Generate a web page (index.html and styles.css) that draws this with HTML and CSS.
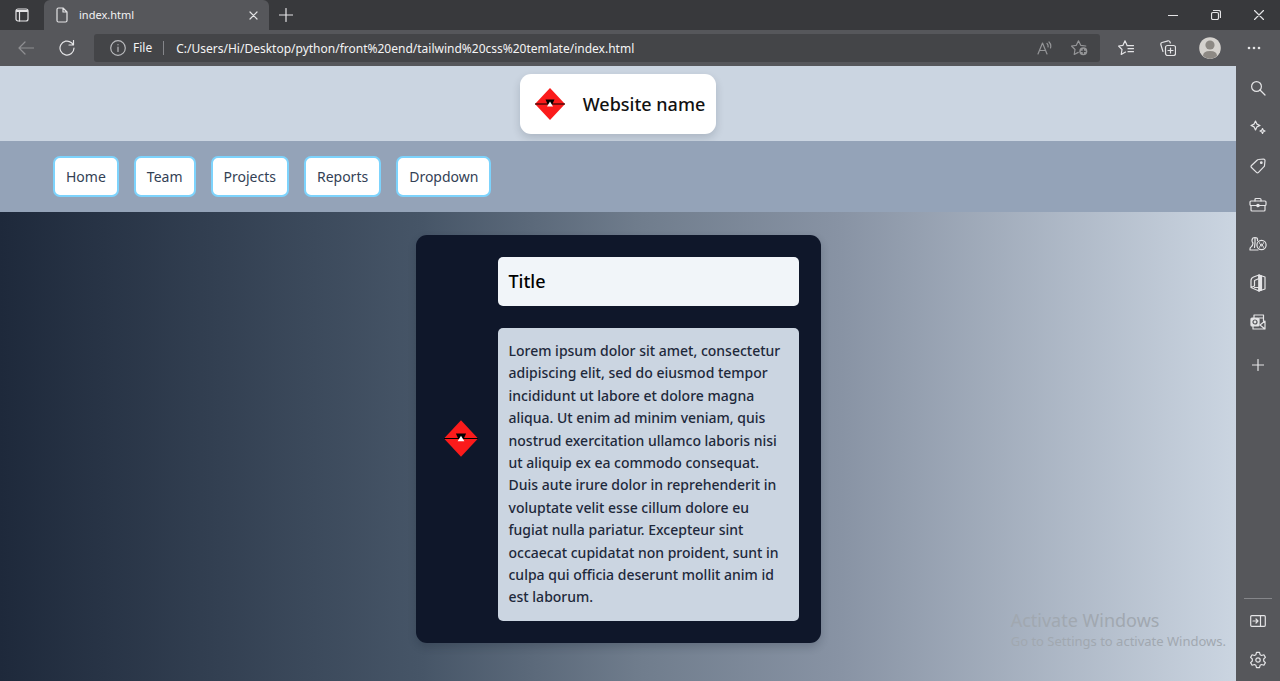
FILE: index.html
```html
<!DOCTYPE html>
<html lang="en">
<head>
<meta charset="utf-8">
<title>index.html</title>
<link rel="stylesheet" href="styles.css">
</head>
<body>
<svg width="0" height="0" class="defs" aria-hidden="true">
  <symbol id="logo" viewBox="0 0 30 32">
    <path d="M15 0 30 16 15 32 0 16z" fill="#fb1b1b"/>
    <path d="M0 16h30" stroke="#000" stroke-width="1"/>
    <path d="M10.500 11.500h9l-2 4.500h-5z" fill="#000"/>
    <path d="M15 13.500 18 18.500h-6z" fill="#fff"/>
  </symbol>
</svg>
<div class="window">
  <header class="tabbar">
    <button class="icon-btn tab-actions" aria-label="Tab actions"><svg width="14" height="14" viewBox="0 0 14 14"><rect x="1" y="1" width="12" height="12" rx="2"/><path d="M1.500 2.500h11M1.500 3.500h11M4.500 4v9"/></svg></button>
    <div class="tab">
      <svg width="12" height="16" viewBox="0 0 12 16"><path d="M1 2.500Q1 1 2.500 1H7l4 4v8.500q0 1.500-1.500 1.500h-7Q1 15 1 13.500zM7 1v4h4"/></svg>
      <span class="tab-title">index.html</span>
      <button class="icon-btn" aria-label="Close tab"><svg width="9" height="9" viewBox="0 0 9 9"><path d="m1 1 7 7M8 1 1 8"/></svg></button>
    </div>
    <button class="icon-btn new-tab" aria-label="New tab"><svg width="14" height="14" viewBox="0 0 14 14"><path d="M7 .5v13M.5 7h13"/></svg></button>
    <div class="window-controls">
      <button class="icon-btn" aria-label="Minimize"><svg width="10" height="10" viewBox="0 0 10 10"><path d="M0 5.500h10"/></svg></button>
      <button class="icon-btn" aria-label="Restore"><svg width="10" height="10" viewBox="0 0 10 10"><rect x=".5" y="2.500" width="7" height="7" rx="1.500"/><path d="M2.500.5H7.500q2 0 2 2v5"/></svg></button>
      <button class="icon-btn" aria-label="Close"><svg width="10" height="10" viewBox="0 0 10 10"><path d="m.5.5 9 9M9.500.5l-9 9"/></svg></button>
    </div>
  </header>
  <div class="toolbar">
    <button class="icon-btn back" aria-label="Back"><svg width="16" height="14" viewBox="0 0 16 14"><path d="M15.500 7H1M7 1 1 7l6 6"/></svg></button>
    <button class="icon-btn reload" aria-label="Refresh"><svg width="16" height="16" viewBox="0 0 16 16"><path d="M15 8A7 7 0 1 1 12.500 2.700L14 4.500M14.500.5v4.500H10"/></svg></button>
    <div class="address">
      <svg class="info" width="16" height="16" viewBox="0 0 16 16"><circle cx="8" cy="8" r="7.300"/><path d="M8 7.200v4.300M8 4.500v.3"/></svg>
      <span class="scheme">File</span>
      <input class="url" aria-label="Address" value="C:/Users/Hi/Desktop/python/front%20end/tailwind%20css%20temlate/index.html">
      <button class="icon-btn dim" aria-label="Read aloud"><svg width="16" height="14" viewBox="0 0 16 14"><path d="m1 13 4.500-11L10 13M2.500 9.500h6M10 2.500q1.500 1.500 1 3.500M12 1q2.500 2.500 1.500 6"/></svg></button>
      <button class="icon-btn dim" aria-label="Add to favorites"><svg width="17" height="16" viewBox="0 0 17 16"><path d="M14.800 6 9.700 5.300 7.500.8 5.300 5.300.5 6l3.500 3.500-.8 5 4-2.100"/><circle cx="12.300" cy="11.300" r="4" fill="#e4e4e6" stroke="none"/><path d="M12.300 9.300v4M10.300 11.300h4" stroke="#444548"/></svg></button>
    </div>
    <div class="tools">
      <button class="icon-btn" aria-label="Favorites"><svg width="16" height="16" viewBox="0 0 16 16"><path d="M14 5.700 9 5.300 7 .8 5 5.300.6 6l3.400 3.500-.8 5 4.300-2.400M10 8.700h5.500M9 5.700h6.500M10 11.700h5.500"/></svg></button>
      <button class="icon-btn" aria-label="Collections"><svg width="16" height="16" viewBox="0 0 16 16"><rect x="5.500" y="5.500" width="10" height="10" rx="2"/><path d="M10.500 8v5M8 10.500h5M3 11.500.8 4.500Q.5 3 2 2.500l6-1.700q1.500-.3 2 1.200l.3 1"/></svg></button>
      <button class="icon-btn" aria-label="Profile"><svg class="avatar" width="22" height="22" viewBox="0 0 22 22"><circle cx="11" cy="11" r="10.800" fill="#d5d2ce"/><circle cx="11" cy="8" r="4.600" fill="#8d8984"/><path d="M4 19q0-5 7-5t7 5a10.500 10.500 0 0 1-14 0z" fill="#8d8984"/></svg></button>
      <button class="icon-btn" aria-label="More"><svg class="dots" width="14" height="4" viewBox="0 0 14 4"><circle cx="2" cy="2" r="1.300"/><circle cx="7" cy="2" r="1.300"/><circle cx="12" cy="2" r="1.300"/></svg></button>
    </div>
  </div>
  <div class="content">
    <div class="page">
      <div class="banner">
        <div class="brand"><svg class="logo brand-logo"><use href="#logo"/></svg><span>Website name</span></div>
      </div>
      <nav class="nav">
        <a href="#">Home</a><a href="#">Team</a><a href="#">Projects</a><a href="#">Reports</a><a href="#">Dropdown</a>
      </nav>
      <main class="main">
        <article class="card">
          <svg class="logo card-logo"><use href="#logo"/></svg>
          <div class="card-body">
            <h1 class="title">Title</h1>
            <p class="text">Lorem ipsum dolor sit amet, consectetur<br>adipiscing elit, sed do eiusmod tempor<br>incididunt ut labore et dolore magna<br>aliqua. Ut enim ad minim veniam, quis<br>nostrud exercitation ullamco laboris nisi<br>ut aliquip ex ea commodo consequat.<br>Duis aute irure dolor in reprehenderit in<br>voluptate velit esse cillum dolore eu<br>fugiat nulla pariatur. Excepteur sint<br>occaecat cupidatat non proident, sunt in<br>culpa qui officia deserunt mollit anim id<br>est laborum.</p>
          </div>
        </article>
      </main>
      <div class="watermark"><div class="wm-title">Activate Windows</div><div class="wm-text">Go to Settings to activate Windows.</div></div>
    </div>
    <aside class="sidebar">
      <button class="icon-btn" aria-label="Search"><svg width="16" height="16" viewBox="0 0 16 16"><circle cx="6.500" cy="6.500" r="4.900"/><path d="m10 10 5 5"/></svg></button>
      <button class="icon-btn" aria-label="Discover"><svg width="16" height="16" viewBox="0 0 16 16"><path d="M5.500 2 6.900 5.100 10 6.500 6.900 7.900 5.500 11 4.100 7.900 1 6.500 4.100 5.100zM12.500 9.500l.8 1.700 1.700.8-1.700.8-.8 1.700-.8-1.700-1.700-.8 1.700-.8z"/></svg></button>
      <button class="icon-btn" aria-label="Shopping"><svg width="16" height="16" viewBox="0 0 16 16"><path d="M8.500 1.500 13.500 1q1.500 0 1.500 1.500l-.5 5q0 .7-.5 1.200l-5.500 5.600q-1 1-2 0L1.500 9.500q-1-1 0-2L7.300 2q.5-.5 1.200-.5z"/><circle cx="11.300" cy="4.700" r=".8" fill="#e4e4e6"/></svg></button>
      <button class="icon-btn" aria-label="Tools"><svg width="18" height="16" viewBox="0 0 18 16"><rect x="1" y="4" width="16" height="4.500" rx="1"/><path d="M2 8.500V13q0 1 1 1h12q1 0 1-1V8.500M6 4V2.500Q6 1.500 7 1.500h4q1 0 1 1V4"/><circle cx="9" cy="8.500" r="1.200" fill="#e4e4e6"/></svg></button>
      <button class="icon-btn" aria-label="Games"><svg width="18" height="16" viewBox="0 0 18 16"><path d="M8.500 4.500Q9 1.500 6 1.500T3 4.500q0 1.500 1 2.500-.2 3-2 4-1 .5-1 2v1h8M6 2v5l-.5 4.500"/><circle cx="12.500" cy="9" r="4.600"/><circle cx="12.500" cy="9" r="1"/><path d="m10.500 7 .1.100M14.500 7l-.1.100M10.500 11l.1-.1M14.500 11l-.1-.1"/></svg></button>
      <button class="icon-btn" aria-label="Office"><svg width="16" height="18" viewBox="0 0 16 18"><path d="M9 1 3.500 3Q1 4 1 6.500v7L4.500 12V6.500L9 4.500zM1 13.500 9 17v-3.500H4.500"/><path d="M9 1l6 2v12l-6 2z"/><path d="M9 1 11.500 2v14L9 17z" fill="#e4e4e6"/></svg></button>
      <button class="icon-btn" aria-label="Outlook"><svg width="16" height="16" viewBox="0 0 16 16"><path d="M4 4V1h9.500v6M3 12v3h12V7l-5 4M10 11l5 4M9 4h4"/><rect x="1" y="4" width="8" height="8" rx="1" fill="#e4e4e6"/><circle cx="5" cy="8" r="2" stroke="#56575b"/></svg></button>
      <button class="icon-btn add" aria-label="Add"><svg width="12" height="12" viewBox="0 0 12 12"><path d="M6 .5v11M.5 6h11"/></svg></button>
      <div class="side-bottom">
        <button class="icon-btn" aria-label="Hide sidebar"><svg width="16" height="12" viewBox="0 0 16 12"><rect x=".7" y=".7" width="14.600" height="10.600" rx="1"/><path d="M10.500 1v10M3 6h5M6 4l2 2-2 2"/></svg></button>
        <button class="icon-btn" aria-label="Settings"><svg width="16" height="18" viewBox="0 0 16 18"><path d="M6.500 1.300h3l.6 2.400 1.500.8 2.300-.7 1.500 2.600L13.700 8v2l1.700 1.600-1.500 2.600-2.300-.7-1.500.8-.6 2.400h-3l-.6-2.400-1.500-.8-2.300.7-1.500-2.600L2.300 10V8L.6 6.400l1.500-2.600 2.300.7 1.500-.8z"/><circle cx="8" cy="9" r="2.200"/></svg></button>
      </div>
    </aside>
  </div>
</div>
</body>
</html>
```
FILE: styles.css
```css
* { box-sizing: border-box; }
body { margin: 0; font-family: "Noto Sans", "Open Sans", sans-serif; }
svg { display: block; flex: none; fill: none; stroke: #e4e4e6; stroke-width: 1.2; stroke-linecap: round; stroke-linejoin: round; }
.defs { position: absolute; }
.window { display: flex; flex-direction: column; min-height: 100vh; background: #56575b; }
.icon-btn { display: flex; align-items: center; justify-content: center; flex: none; padding: 0; border: 0; background: none; }

.tabbar { display: flex; align-items: center; height: 30px; background: #38393c; }
.tab-actions { width: 44px; }
.tab { display: flex; align-items: center; gap: 11px; width: 225px; height: 30px; padding: 0 11px 0 12px; border-radius: 6px 6px 0 0; background: #56575b; color: #f2f2f3; font-size: 11px; line-height: 14px; }
.tab-title { flex: 1; }
.new-tab { width: 33px; }
.window-controls { display: flex; margin-left: auto; }
.window-controls .icon-btn { width: 43px; height: 30px; }

.toolbar { display: flex; align-items: center; height: 36px; }
.back { width: 52px; opacity: .4; }
.reload { width: 30px; margin-right: 12px; }
.address { display: flex; align-items: center; flex: 1; height: 28px; padding: 0 4px 0 16px; border-radius: 3px; background: #444548; color: #f4f4f5; font-size: 12px; }
.info { stroke: #b9babd; }
.scheme { margin: 0 12px 0 7px; padding-right: 11px; border-right: 1px solid #85868a; line-height: 14px; }
.url { flex: 1; min-width: 0; padding: 0; border: 0; outline: 0; background: none; color: inherit; font: inherit; }
.dim { width: 34px; opacity: .5; }
.tools { display: flex; width: 180px; padding-left: 5px; }
.tools .icon-btn { width: 42px; }
.tools .icon-btn:last-child { width: 45px; }
.avatar, .logo { stroke: none; }
.dots { fill: #e4e4e6; stroke: none; }

.content { display: flex; flex: 1; }
.page { position: relative; display: flex; flex: 1; flex-direction: column; min-width: 0; }
.banner { display: flex; justify-content: center; padding: 8px 0 7px; background: #cbd5e1; }
.brand { display: flex; align-items: center; gap: 18px; height: 60px; padding: 0 11px 0 15px; border-radius: 11px; background: #fff; box-shadow: 0 4px 8px rgba(15, 23, 42, .16); color: #111; font-size: 18px; font-weight: 500; }
.brand-logo { width: 30px; height: 32px; }
.nav { display: flex; gap: 15px; padding: 15px 53px; background: #94a3b8; }
.nav a { height: 41px; padding: 0 11px; border: 2px solid #7dd3fc; border-radius: 7px; background: #fff; color: #334155; font-size: 14px; line-height: 38px; text-decoration: none; }
.main { display: flex; flex: 1; justify-content: center; align-items: flex-start; padding: 23px 0 38px; background: linear-gradient(to right, #1e293b, #465567 34%, #707d8d 52%, #8893a4 68%, #cbd5e1); }
.card { display: flex; align-items: center; gap: 20px; width: 405px; padding: 22px 22px 22px 28px; border-radius: 11px; background: #0f172a; box-shadow: 0 4px 8px rgba(15, 23, 42, .2); }
.card-logo { width: 34px; height: 37px; }
.card-body { display: flex; flex: 1; flex-direction: column; gap: 22px; min-width: 0; }
.title { margin: 0; padding: 11px; border-radius: 5px; background: #f1f5f9; color: #000; font-size: 18px; font-weight: 500; line-height: 27px; }
.text { margin: 0; padding: 12px 11px; border-radius: 5px; background: #cbd5e1; color: #1e293b; font-size: 14px; font-weight: 500; line-height: 1.6; white-space: nowrap; }
.watermark { position: absolute; right: 10px; bottom: 31px; color: #a1a8b0; }
.wm-title { font-size: 18px; line-height: 23px; }
.wm-text { font-size: 13px; line-height: 18px; }

.sidebar { display: flex; flex-direction: column; width: 44px; padding-top: 2px; background: #56575b; }
.sidebar .icon-btn { width: 44px; height: 39px; }
.sidebar .add { margin-top: 4px; }
.side-bottom { margin: auto 8px 0; padding: 2px 0; border-top: 1px solid #85868a; }
.side-bottom .icon-btn { width: 28px; }
```
